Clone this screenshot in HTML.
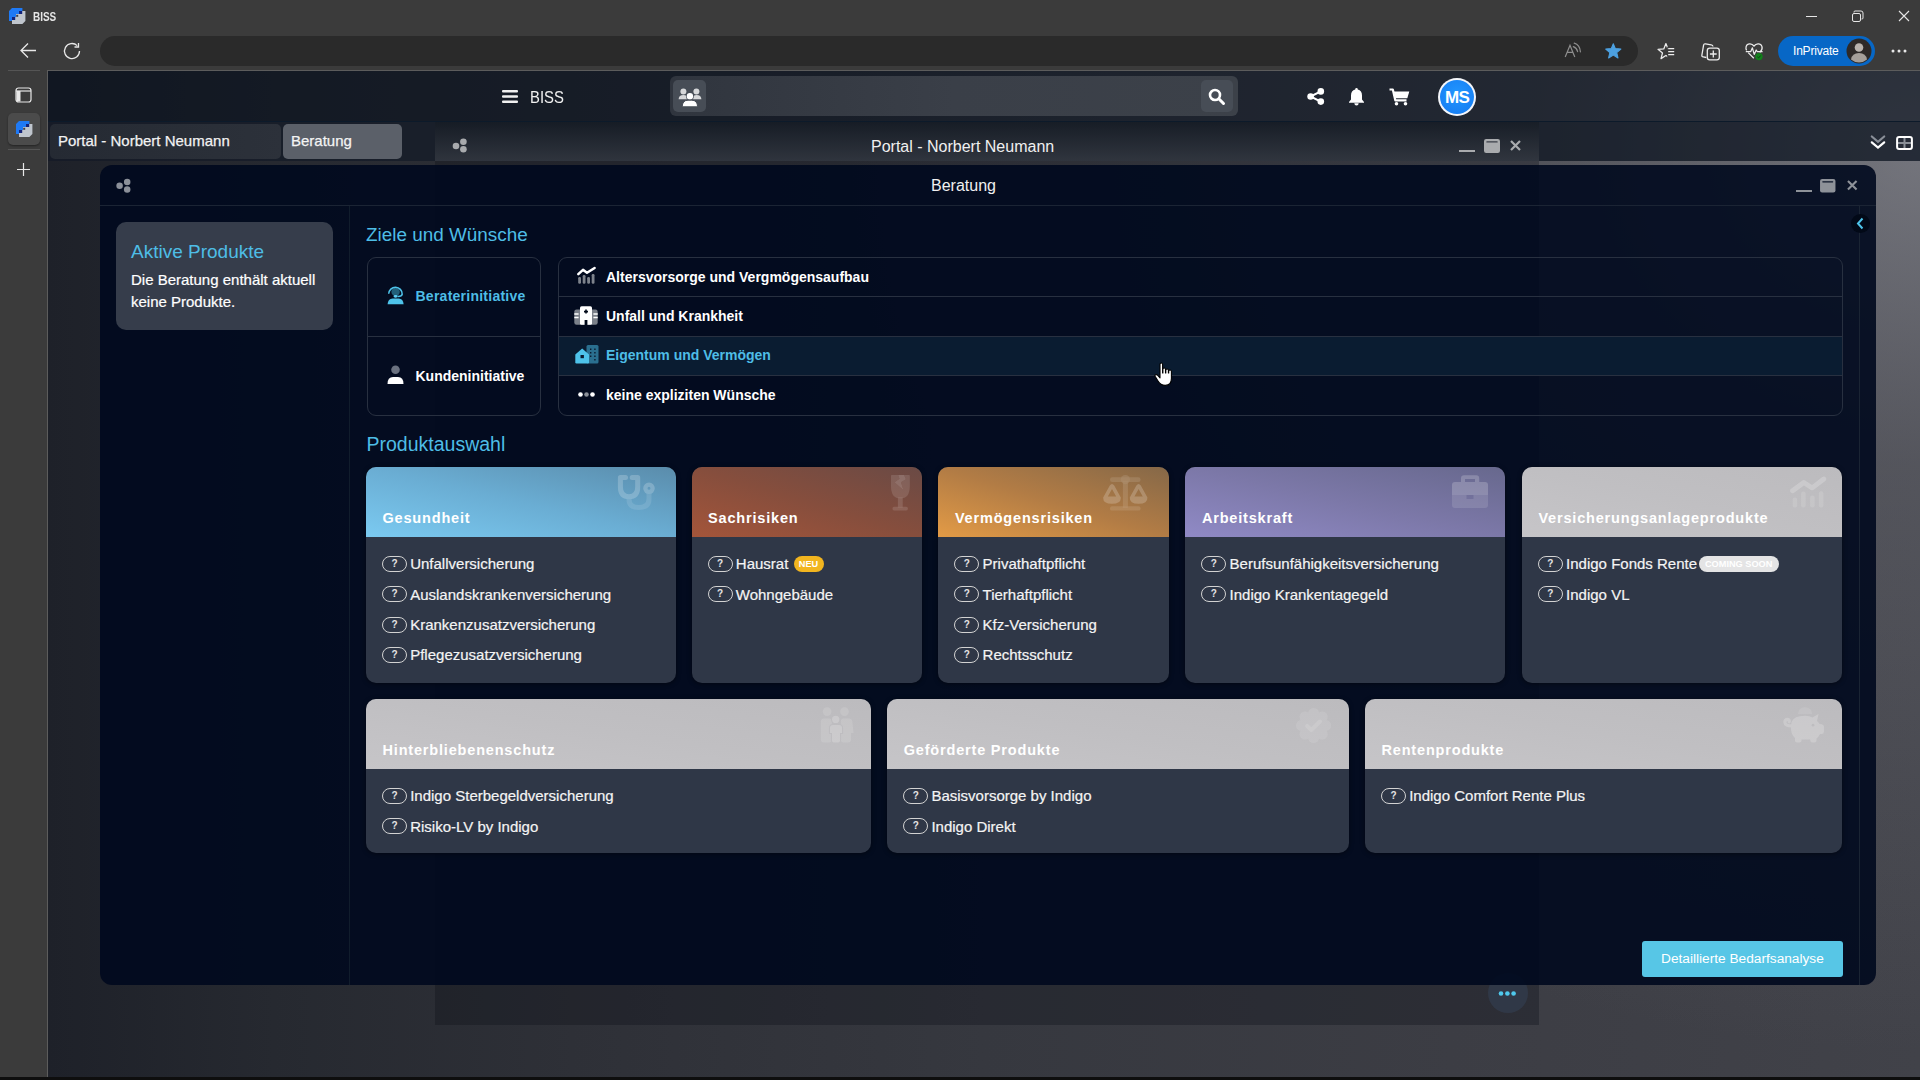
<!DOCTYPE html>
<html><head><meta charset="utf-8">
<style>
*{box-sizing:border-box;margin:0;padding:0}
html,body{width:1920px;height:1080px;overflow:hidden;background:#3b3b3b;font-family:"Liberation Sans",sans-serif;color:#fff;position:relative}
div,span{position:absolute}
svg{position:absolute;display:block;overflow:visible}
.t{white-space:nowrap;line-height:1}
/* browser chrome */
#addr{left:100px;top:36px;width:1538px;height:30px;border-radius:15px;background:#2a2a2a}
#vline{left:47px;top:70px;width:1px;height:1007px;background:#5c5c5c}
#hline{left:47px;top:70px;width:1873px;height:1px;background:#5c5c5c}
#bottomline{left:0;top:1077px;width:1920px;height:3px;background:#0e0e0e}
/* page */
#page{left:48px;top:71px;width:1872px;height:1006px;overflow:hidden;
 background:radial-gradient(ellipse 1100px 900px at 1872px 80px, rgba(140,141,149,.68) 0%, rgba(112,113,121,.4) 35%, rgba(80,81,88,0) 100%),
  linear-gradient(90deg,#1e2129 0%,#262930 12%,#2e3037 28%,#36383f 50%,#3c3d44 75%,#414249 100%);}
#apphdr{left:48px;top:71px;width:1872px;height:90px;background:rgba(10,18,30,0.66)}
#apphdrline{left:48px;top:121px;width:1872px;height:1px;background:#0c1a2a}
/* modal */
#modal{left:99.5px;top:165px;width:1776.5px;height:820px;border-radius:12px;overflow:hidden;
  background:rgba(0,9,30,.9)}
.card{border-radius:10px;background:#2f3747;box-shadow:0 1px 5px rgba(0,0,0,.45)}
.ctitle{font-size:14.5px;font-weight:700;letter-spacing:.82px;color:#fff}
.q{width:25px;height:16px;border:1.2px solid #d2d2d2;border-radius:8px;font-size:10px;font-weight:700;color:#e4e4e4;text-align:center;line-height:13.6px}
.it{font-size:15px;color:#f4f4f4;-webkit-text-stroke:.2px #f4f4f4}
.badge{height:16px;border-radius:8px;font-size:9.2px;font-weight:700;color:#fff;text-align:center;line-height:16px}
.wm{opacity:.2}
</style></head><body>
<!-- CHROME -->
<!-- favicon -->
<svg style="left:9px;top:8px" width="17" height="17" viewBox="0 0 17 17"><path d="M3 3 H16.4 V13 L13.4 16 H3Z" fill="#bfc5cd"/><path d="M3 0 H13.4 V3 H10 V6 H7 V9 H3 V13 H0 V3Z" fill="#1f7af5"/><rect x="10" y="3" width="3.2" height="3" fill="#14247a"/><rect x="3" y="9" width="3.2" height="3" fill="#14247a"/><rect x="7.2" y="6.8" width="2" height="2" fill="#3a3d4a"/></svg>
<span class="t" style="left:33.3px;top:11px;font-size:12px;font-weight:700;color:#e6e6e6;transform:scaleX(.83);transform-origin:0 0">BISS</span>
<!-- window controls -->
<svg style="left:1806px;top:16px" width="11" height="1"><rect width="11" height="1" fill="#e6e6e6"/></svg>
<svg style="left:1851px;top:10px" width="13" height="12" viewBox="0 0 13 12"><path d="M3 2.5 V2 Q3 1 4 1 H10 Q12 1 12 3 V8 Q12 9 11 9 H10.5" fill="none" stroke="#e6e6e6" stroke-width="1"/><rect x="1.5" y="3.5" width="8" height="8" rx="1.5" fill="none" stroke="#e6e6e6" stroke-width="1"/></svg>
<svg style="left:1898px;top:10px" width="12" height="12" viewBox="0 0 12 12"><path d="M1 1 L11 11 M11 1 L1 11" stroke="#e6e6e6" stroke-width="1.1"/></svg>
<!-- back / refresh -->
<svg style="left:19px;top:42px" width="18" height="17" viewBox="0 0 18 17"><path d="M9 1.5 L2 8.5 L9 15.5 M2 8.5 H17" fill="none" stroke="#e8e8e8" stroke-width="1.3"/></svg>
<svg style="left:63px;top:42px" width="19" height="18" viewBox="0 0 19 18"><path d="M16.5 9 A7.5 7.5 0 1 1 14.2 3.6" fill="none" stroke="#e8e8e8" stroke-width="1.3"/><path d="M15.5 1 V5 H11.5" fill="none" stroke="#e8e8e8" stroke-width="1.3"/></svg>
<div id="addr"></div>
<!-- toolbar right -->
<svg style="left:1564px;top:42px" width="20" height="17" viewBox="0 0 20 17"><path d="M1.2 15 L6 3.3 L10.8 15 M3 10.4 H9" fill="none" stroke="#8e8e8e" stroke-width="1.2"/><path d="M9.3 4.6 Q12.8 5.8 13.6 9.6 M10.2 1.2 Q15.9 2.8 16.4 9.8" fill="none" stroke="#8e8e8e" stroke-width="1.2" stroke-linecap="round"/></svg>
<svg style="left:1604.6px;top:42.8px" width="16.6" height="16" viewBox="0 0 24 23"><path d="M12 1 L15 8 L23 8.6 L17 13.8 L18.8 21.6 L12 17.4 L5.2 21.6 L7 13.8 L1 8.6 L9 8Z" fill="#4ca0e0" stroke="#4ca0e0" stroke-width="1.5" stroke-linejoin="round"/></svg>
<svg style="left:1656px;top:42px" width="20" height="19" viewBox="0 0 20 19"><polygon points="9.90,1.60 12.02,6.99 17.79,7.34 13.32,11.01 14.78,16.61 9.90,13.50 5.02,16.61 6.48,11.01 2.01,7.34 7.78,6.99" fill="none" stroke="#ececec" stroke-width="1.25" stroke-linejoin="round"/><rect x="11.2" y="4.8" width="9" height="14.2" fill="#3b3b3b"/><path d="M12.2 6.6 H18.2 M12.2 9.6 H18.2 M12.2 12.6 H18.2" stroke="#ececec" stroke-width="1.25"/></svg>
<svg style="left:1700px;top:42px" width="21" height="19" viewBox="0 0 21 19"><path d="M6.3 15.5 L3.2 14.9 Q1.6 14.6 1.9 13 L3.6 3.2 Q3.9 1.6 5.5 1.9 L11.2 2.9 Q12.8 3.2 13 4.5" fill="none" stroke="#ececec" stroke-width="1.3"/><rect x="7.3" y="6.2" width="12" height="11.6" rx="2.4" fill="none" stroke="#ececec" stroke-width="1.3"/><path d="M13.3 8.6 V15.4 M9.9 12 H16.7" stroke="#ececec" stroke-width="1.3"/></svg>
<svg style="left:1745px;top:42px" width="19" height="19" viewBox="0 0 19 19"><path d="M8.8 16.2 L3.2 10.6 M14.8 10.4 Q17.8 7.5 17 4.6 Q16 1.6 13 1.8 Q10.6 2 9 4 Q7.4 2 5 1.8 Q2 1.6 1.1 4.6 Q0.6 6.8 1.6 8.4" fill="none" stroke="#ececec" stroke-width="1.25"/><path d="M0.8 9.5 H5.8 L7.4 5.8 L9.2 12.4 L11.2 8 L12.2 9.5 H17.6" fill="none" stroke="#ececec" stroke-width="1.25" stroke-linejoin="round"/><circle cx="14" cy="14.6" r="3.7" fill="#12801c"/><path d="M12.4 14.8 L13.6 15.9 L15.6 13.6" fill="none" stroke="#0b3d12" stroke-width=".9"/></svg>
<div style="left:1778px;top:36px;width:97px;height:30px;border-radius:15px;background:#0767c6"></div>
<span class="t" style="left:1793px;top:45px;font-size:12px;color:#fff;letter-spacing:-.2px">InPrivate</span>
<svg style="left:1846px;top:38px" width="26" height="26" viewBox="0 0 26 26"><circle cx="13" cy="13" r="12.5" fill="#2e2a28"/><circle cx="13" cy="9.5" r="4.3" fill="#b9b3ad"/><path d="M5 21.5 Q6 15 13 15 Q20 15 21 21.5 Q17.5 24.5 13 24.5 Q8.5 24.5 5 21.5Z" fill="#a59f99"/></svg>
<svg style="left:1891px;top:49px" width="16" height="4"><circle cx="2" cy="2" r="1.5" fill="#e8e8e8"/><circle cx="8" cy="2" r="1.5" fill="#e8e8e8"/><circle cx="14" cy="2" r="1.5" fill="#e8e8e8"/></svg>
<!-- sidebar -->
<div style="left:8px;top:70px;width:32px;height:1px;background:#555"></div>
<svg style="left:15px;top:87px" width="17" height="16" viewBox="0 0 17 16"><rect x="1" y="1" width="15" height="14" rx="2.5" fill="none" stroke="#e8e8e8" stroke-width="1.2"/><path d="M1 4 H16" stroke="#e8e8e8" stroke-width="1.2"/><rect x="1.5" y="4" width="4" height="10.5" fill="#e8e8e8"/></svg>
<div style="left:8px;top:113px;width:32px;height:32px;border-radius:5px;background:#4b4b4b;box-shadow:0 1px 2px rgba(0,0,0,.4)"></div>
<svg style="left:15.5px;top:120.5px" width="17" height="17" viewBox="0 0 17 17"><path d="M3 3 H16.4 V13 L13.4 16 H3Z" fill="#bfc5cd"/><path d="M3 0 H13.4 V3 H10 V6 H7 V9 H3 V13 H0 V3Z" fill="#1f7af5"/><rect x="10" y="3" width="3.2" height="3" fill="#14247a"/><rect x="3" y="9" width="3.2" height="3" fill="#14247a"/><rect x="7.2" y="6.8" width="2" height="2" fill="#3a3d4a"/></svg>
<div style="left:8px;top:149px;width:32px;height:1px;background:#555"></div>
<svg style="left:16px;top:162px" width="15" height="15" viewBox="0 0 15 15"><path d="M7.5 1 V14 M1 7.5 H14" stroke="#e8e8e8" stroke-width="1.2"/></svg>

<div id="page"></div>
<div id="apphdr"></div>
<div id="apphdrline"></div>
<div style="left:1539px;top:122px;width:381px;height:39px;background:rgba(10,18,30,.22)"></div>
<div style="left:48px;top:122px;width:387px;height:39px;background:rgba(120,125,135,.05)"></div>
<!-- app header -->
<svg style="left:502px;top:90px" width="16" height="13" viewBox="0 0 16 13"><rect y="0" width="16" height="2.4" rx="1" fill="#f0f0f0"/><rect y="5.3" width="16" height="2.4" rx="1" fill="#f0f0f0"/><rect y="10.6" width="16" height="2.4" rx="1" fill="#f0f0f0"/></svg>
<span class="t" style="left:530px;top:89px;font-size:16.5px;color:#f0f0f0;transform:scaleX(.9);transform-origin:0 0">BISS</span>
<div style="left:670px;top:76px;width:568px;height:40px;border-radius:6px;background:linear-gradient(90deg,#30353e,#3a3f48 50%,#3c4149)"></div>
<div style="left:673px;top:80px;width:33px;height:32px;border-radius:5px;background:#474d56"></div>
<svg style="left:678px;top:87px" width="24" height="20" viewBox="0 0 24 20"><g fill="#d6d7d9"><circle cx="5.4" cy="4.5" r="3"/><circle cx="18.4" cy="4.5" r="3"/><path d="M0.6 12.3 Q0.8 8 5.4 8 Q9 8 9.6 10.5 V12.3Z M23.4 12.3 Q23.2 8 18.6 8 Q15 8 14.4 10.5 V12.3Z"/></g><circle cx="11.9" cy="9.2" r="3.9" fill="#474d56"/><circle cx="11.9" cy="9.2" r="3.2" fill="#fff"/><path d="M4.2 19.8 Q4.4 13.2 10 13.2 H13.8 Q19.4 13.2 19.6 19.8Z" fill="#fff" stroke="#474d56" stroke-width="1"/></svg>
<div style="left:1201px;top:80px;width:32px;height:32px;border-radius:5px;background:#474d56"></div>
<svg style="left:1208px;top:88px" width="18" height="17" viewBox="0 0 18 17"><circle cx="7" cy="7" r="5" fill="none" stroke="#fff" stroke-width="2.6"/><path d="M10.8 10.8 L15.5 15.5" stroke="#fff" stroke-width="3" stroke-linecap="round"/></svg>
<svg style="left:1307px;top:88px" width="18" height="17" viewBox="0 0 18 17"><circle cx="3.6" cy="8.5" r="3.3" fill="#fff"/><circle cx="13.8" cy="3.4" r="3.3" fill="#fff"/><circle cx="13.8" cy="13.6" r="3.3" fill="#fff"/><path d="M3.6 8.5 L13.8 3.4 M3.6 8.5 L13.8 13.6" stroke="#fff" stroke-width="2"/></svg>
<svg style="left:1348px;top:87px" width="17" height="19" viewBox="0 0 17 19"><path d="M8.5 1 Q9.8 1 9.8 2.4 Q14 3.4 14 8.5 V12.5 L16 15 V15.8 H1 V15 L3 12.5 V8.5 Q3 3.4 7.2 2.4 Q7.2 1 8.5 1Z" fill="#fff"/><path d="M6.3 16.3 Q6.5 18.5 8.5 18.5 Q10.5 18.5 10.7 16.3Z" fill="#fff"/></svg>
<svg style="left:1389px;top:88px" width="21" height="18" viewBox="0 0 21 18"><path d="M0.5 1.5 H3.8 L6.3 12.3 H17.5" fill="none" stroke="#fff" stroke-width="2.2" stroke-linejoin="round"/><path d="M4.8 3.5 H20.3 L18.3 10.2 H6.3Z" fill="#fff"/><circle cx="7.5" cy="15.8" r="1.8" fill="#fff"/><circle cx="16.5" cy="15.8" r="1.8" fill="#fff"/></svg>
<div style="left:1438px;top:77.5px;width:38px;height:38px;border-radius:50%;background:#f4f6fa"></div>
<div style="left:1440px;top:79.5px;width:34px;height:34px;border-radius:50%;background:radial-gradient(circle at 50% 40%,#2196ff,#1479f0)"></div>
<span class="t" style="left:1443px;top:89px;width:28px;text-align:center;font-size:17px;font-weight:700;color:#fff;letter-spacing:-.8px">MS</span>
<!-- tabs -->
<div style="left:50px;top:124px;width:231px;height:35px;border-radius:5px;background:linear-gradient(90deg,#252a33,#2c313a)"></div>
<span class="t" style="left:58px;top:133px;font-size:15px;color:#f2f2f2;-webkit-text-stroke:.25px #f2f2f2">Portal - Norbert Neumann</span>
<div style="left:283px;top:124px;width:119px;height:35px;border-radius:5px;background:#5b6069"></div>
<span class="t" style="left:291px;top:133px;font-size:15px;color:#f4f4f4;-webkit-text-stroke:.25px #f4f4f4">Beratung</span>
<!-- double chevron + grid -->
<svg style="left:1870px;top:135px" width="16" height="15" viewBox="0 0 16 15"><path d="M1.8 1.5 L8 6.8 L14.2 1.5" fill="none" stroke="#8a8f98" stroke-width="2.2" stroke-linecap="round"/><path d="M1.8 7.3 L8 12.6 L14.2 7.3" fill="none" stroke="#fff" stroke-width="2.2" stroke-linecap="round"/></svg>
<svg style="left:1896px;top:135.5px" width="17" height="14" viewBox="0 0 17 14"><path d="M8.5 2 V12 M2 7 H15" stroke="#8a8f98" stroke-width="2"/><rect x="1.1" y="1.1" width="14.8" height="11.8" rx="2" fill="none" stroke="#fff" stroke-width="2"/></svg>
<!-- portal window -->
<div style="left:435px;top:122px;width:1104px;height:39px;background:linear-gradient(180deg,rgba(22,28,37,.85),rgba(50,55,64,.9))"></div>
<div style="left:435px;top:161px;width:1104px;height:864px;background:rgba(14,18,26,.35)"></div>
<svg style="left:452px;top:138px" width="15" height="15" viewBox="0 0 15 15"><circle cx="4" cy="8" r="3.3" fill="#a8aaad"/><circle cx="11.4" cy="3.8" r="3.3" fill="#a8aaad"/><circle cx="11.4" cy="11.3" r="3.3" fill="#a8aaad"/></svg>
<span class="t" style="left:871px;top:139.3px;font-size:16px;color:#f0f0f0">Portal - Norbert Neumann</span>
<div style="left:1459px;top:150px;width:16px;height:2px;background:#a9abae"></div>
<svg style="left:1483.5px;top:138.5px" width="16" height="14" viewBox="0 0 16 14"><rect x="0" y="0" width="16" height="14" rx="2.2" fill="#a9abae"/><rect x="2.3" y="2.3" width="11.4" height="1.2" rx=".6" fill="#3a3f48"/></svg>
<svg style="left:1510px;top:140px" width="11" height="11" viewBox="0 0 11 11"><path d="M1 1 L10 10 M10 1 L1 10" stroke="#a9abae" stroke-width="2.2"/></svg>
<!-- dots button -->
<div style="left:1487.5px;top:973px;width:40px;height:40px;border-radius:50%;background:rgba(52,66,86,.55)"></div>
<!-- MODAL -->
<div id="modal"></div>
<div style="left:99.5px;top:205px;width:1776.5px;height:1px;background:#1b2434"></div>
<div style="left:349px;top:206px;width:1px;height:779px;background:#111d2c"></div>
<div style="left:1859px;top:206px;width:1px;height:779px;background:#1a2433"></div>
<svg style="left:115px;top:177.5px" width="16" height="16" viewBox="0 0 16 16"><circle cx="4.6" cy="7.75" r="3.25" fill="#8b9099"/><circle cx="12.2" cy="4" r="3.25" fill="#8b9099"/><circle cx="12.2" cy="11.6" r="3.25" fill="#8b9099"/></svg>
<span class="t" style="left:931px;top:177.5px;font-size:16px;color:#f0f0f0">Beratung</span>
<div style="left:1795.5px;top:190px;width:16px;height:2px;background:#8e9299"></div>
<svg style="left:1820px;top:178.5px" width="15.5" height="13.5" viewBox="0 0 16 14"><rect x="0" y="0" width="16" height="14" rx="2.2" fill="#8e9299"/><rect x="2.3" y="2.3" width="11.4" height="1.2" rx=".6" fill="#0b1528"/></svg>
<svg style="left:1846.5px;top:180px" width="10.5" height="10.5" viewBox="0 0 11 11"><path d="M1 1 L10 10 M10 1 L1 10" stroke="#8e9299" stroke-width="2.2"/></svg>
<div style="left:1850.5px;top:214px;width:19px;height:19px;border-radius:50%;background:#020917"></div>
<svg style="left:1856px;top:217px" width="8" height="13" viewBox="0 0 8 13"><path d="M6.5 1.5 L2 6.5 L6.5 11.5" fill="none" stroke="#4ec3ea" stroke-width="2"/></svg>
<!-- left panel -->
<div style="left:116px;top:222px;width:217px;height:108px;border-radius:10px;background:#363d4b"></div>
<span class="t" style="left:131px;top:242px;font-size:19px;color:#4ebde6">Aktive Produkte</span>
<span class="t" style="left:131px;top:268.5px;font-size:15px;color:#fff;line-height:22px;-webkit-text-stroke:.2px #fff">Die Beratung enthält aktuell<br>keine Produkte.</span>
<!-- Ziele und Wünsche -->
<span class="t" style="left:366px;top:225.5px;font-size:18.9px;color:#4ebde6">Ziele und Wünsche</span>
<div style="left:366.5px;top:257px;width:174.5px;height:158.5px;border:1px solid #283040;border-radius:9px"></div>
<div style="left:367px;top:336px;width:173.5px;height:1px;background:#283040"></div>
<svg style="left:387px;top:286px" width="17" height="19" viewBox="0 0 17 19"><circle cx="8.6" cy="5.9" r="4.2" fill="#22607a"/><path d="M1.7 7.8 A6.6 6.6 0 1 1 15.2 8.2 Q14.6 10.6 10.6 10.4" fill="none" stroke="#4ec3ea" stroke-width="1.5"/><ellipse cx="8.6" cy="10.3" rx="2.1" ry="1.4" fill="#5ccff5"/><path d="M0.6 18.3 Q0.9 12.6 5.6 12.4 H11.6 Q16.3 12.6 16.6 18.3Z" fill="#4ec3ea"/></svg>
<span class="t" style="left:415.5px;top:289px;font-size:14px;font-weight:700;color:#4ebde6;letter-spacing:.25px">Beraterinitiative</span>
<svg style="left:387px;top:365px" width="17" height="19" viewBox="0 0 17 19"><circle cx="8.5" cy="4.8" r="4.3" fill="#6b7280"/><path d="M0.5 19 Q0.5 12 6 12 H11 Q16.5 12 16.5 19Z" fill="#fff"/></svg>
<span class="t" style="left:415.5px;top:368.5px;font-size:14px;font-weight:700;color:#fff">Kundeninitiative</span>
<!-- wishes list -->
<div style="left:557.5px;top:336.5px;width:1284.5px;height:39px;background:#0a1c31"></div>
<div style="left:557.5px;top:257px;width:1285px;height:158.5px;border:1px solid #283040;border-radius:9px"></div>
<div style="left:558px;top:296px;width:1284px;height:1px;background:#283040"></div>
<div style="left:558px;top:336px;width:1284px;height:1px;background:#283040"></div>
<div style="left:558px;top:375px;width:1284px;height:1px;background:#283040"></div>
<svg style="left:576.5px;top:266.5px" width="19" height="17" viewBox="0 0 19 17"><path d="M1.3 7.2 L6 2.8 L10 5.8 L17.6 1" fill="none" stroke="#fff" stroke-width="2.5" stroke-linecap="round" stroke-linejoin="round"/><rect x="1.2" y="10" width="2.8" height="6.8" rx="1.2" fill="#7d828b"/><rect x="5.7" y="8" width="2.8" height="8.8" rx="1.2" fill="#7d828b"/><rect x="10.2" y="10" width="2.8" height="6.8" rx="1.2" fill="#7d828b"/><rect x="14.7" y="7" width="2.8" height="9.8" rx="1.2" fill="#7d828b"/></svg>
<span class="t" style="left:606px;top:269.5px;font-size:14px;font-weight:700;color:#fff">Altersvorsorge und Vergmögensaufbau</span>
<svg style="left:574px;top:305.5px" width="24" height="19" viewBox="0 0 24 19"><rect x="0.3" y="3.6" width="23.4" height="15.2" rx="2.2" fill="#7b8089"/><rect x="6" y="0.3" width="12" height="18.5" rx="1.6" fill="#fff"/><path d="M12 3.6 V7.6 M10 5.6 H14" stroke="#020a1a" stroke-width="1.6"/><rect x="10.6" y="14" width="2.8" height="5" fill="#020a1a"/><path d="M0.3 8 H4.6 M0.3 11.5 H4.6 M19.4 8 H23.7 M19.4 11.5 H23.7" stroke="#fff" stroke-width="1.5"/></svg>
<span class="t" style="left:606px;top:308.5px;font-size:14px;font-weight:700;color:#fff">Unfall und Krankheit</span>
<svg style="left:574.5px;top:345px" width="24" height="19" viewBox="0 0 24 19"><rect x="11.5" y="0" width="12" height="18.5" rx="1.5" fill="#2a6f8f"/><path d="M15 4.2 H16.4 M19.2 4.2 H20.6 M15 7.7 H16.4 M19.2 7.7 H20.6 M15 11.2 H16.4 M19.2 11.2 H20.6 M19.2 14.7 H20.6" stroke="#0a1c31" stroke-width="1.4"/><path d="M0.3 9.6 L7.2 3.4 L14 9.6 V17.3 Q14 18.5 12.8 18.5 H1.5 Q0.3 18.5 0.3 17.3Z" fill="#4ec3ea"/><rect x="5.5" y="10" width="3.4" height="3.2" fill="#0a1c31"/></svg>
<span class="t" style="left:606px;top:348.2px;font-size:14px;font-weight:700;color:#4ebde6">Eigentum und Vermögen</span>
<svg style="left:578px;top:391.5px" width="17" height="5" viewBox="0 0 17 5"><circle cx="2.5" cy="2.5" r="2.3" fill="#fff"/><circle cx="8.5" cy="2.5" r="2.3" fill="#8a8f98"/><circle cx="14.5" cy="2.5" r="2.3" fill="#fff"/></svg>
<span class="t" style="left:606px;top:387.5px;font-size:14px;font-weight:700;color:#fff">keine expliziten Wünsche</span>
<!-- Produktauswahl -->
<span class="t" style="left:366.5px;top:435.2px;font-size:19.5px;color:#4ebde6">Produktauswahl</span>
<!-- CARDS START -->
<div class="card" style="left:366px;top:467px;width:309.6px;height:215.5px"></div>
<div style="left:366px;top:467px;width:309.6px;height:70px;border-radius:10px 10px 0 0;background:linear-gradient(to top right,#7bcaf1 0%,#6aadd3 50%,#5a8cab 100%)"></div>
<svg class="wm" style="left:617px;top:475px" width="38" height="36" viewBox="0 0 38 36"><path d="M12 21.7 V24 Q12 32.5 21.5 32.5 Q32 32.5 32 24 V18" fill="none" stroke="#fff" stroke-opacity=".55" stroke-width="5"/><path d="M8.5 2.6 H3.4 V12 Q3.4 21.7 12 21.7 Q20.7 21.7 20.7 12 V2.6 H15.2" fill="none" stroke="#fff" stroke-width="5" stroke-linecap="round" stroke-linejoin="round"/><circle cx="32" cy="13.3" r="3.65" fill="none" stroke="#fff" stroke-width="4.3"/></svg>
<span class="t ctitle" style="left:382.5px;top:510.5px">Gesundheit</span>
<div class="q" style="left:382px;top:556.00px">?</div>
<span class="t it" style="left:410.2px;top:556.30px">Unfallversicherung</span>
<div class="q" style="left:382px;top:586.35px">?</div>
<span class="t it" style="left:410.2px;top:586.65px">Auslandskrankenversicherung</span>
<div class="q" style="left:382px;top:616.70px">?</div>
<span class="t it" style="left:410.2px;top:617.00px">Krankenzusatzversicherung</span>
<div class="q" style="left:382px;top:647.05px">?</div>
<span class="t it" style="left:410.2px;top:647.35px">Pflegezusatzversicherung</span>
<div class="card" style="left:691.6px;top:467px;width:230.9px;height:215.5px"></div>
<div style="left:691.6px;top:467px;width:230.9px;height:70px;border-radius:10px 10px 0 0;background:linear-gradient(to top right,#a4553a 0%,#864e3d 50%,#6a4a45 100%)"></div>
<svg class="wm" style="left:891px;top:475.2px" width="19" height="36" viewBox="0 0 19 36"><g fill="#fff" fill-opacity=".62"><path d="M0 0.8 Q0 0 0.8 0 H18 Q18.8 0 18.8 0.8 V11 Q18.8 23.5 9.4 23.5 Q0 23.5 0 11Z M7.2 0 L8.5 3.75 L3.5 7.3 L12.5 15.2 L10 7.3 L15 4.2 L13.1 0Z" fill-rule="evenodd"/><rect x="6.9" y="22" width="4.8" height="11"/><rect x="1.5" y="31.8" width="15.4" height="3.6" rx="1.6"/></g><path d="M7.2 0 H13.1 L15 4.2 L10 7.3 L12.5 15.2 L3.5 7.3 L8.5 3.75Z" fill="#fff"/></svg>
<span class="t ctitle" style="left:708.1px;top:510.5px">Sachrisiken</span>
<div class="q" style="left:707.6px;top:556.00px">?</div>
<span class="t it" style="left:735.8000000000001px;top:556.30px">Hausrat</span>
<div class="badge" style="left:793.5px;top:556.30px;width:30px;background:#f2b51f">NEU</div>
<div class="q" style="left:707.6px;top:586.35px">?</div>
<span class="t it" style="left:735.8000000000001px;top:586.65px">Wohngebäude</span>
<div class="card" style="left:938.4px;top:467px;width:230.8px;height:215.5px"></div>
<div style="left:938.4px;top:467px;width:230.8px;height:70px;border-radius:10px 10px 0 0;background:linear-gradient(to top right,#e39b46 0%,#b27c45 50%,#856848 100%)"></div>
<svg class="wm" style="left:1103px;top:475px" width="46" height="36" viewBox="0 0 46 36"><g fill="#fff" fill-opacity=".55"><rect x="7" y="2.3" width="30.6" height="4.7" rx="2.35"/><circle cx="22.4" cy="4.6" r="4.6"/><rect x="19.9" y="6" width="5" height="27"/><rect x="7" y="31.25" width="30.6" height="4.35" rx="2.2"/></g><path d="M6.8 10.5 Q9 7.5 11.2 10.5 L17.8 22.5 Q18.2 28.8 9 28.8 Q-0.2 28.8 0.2 22.5Z M9 14 L13.2 21.5 H4.8Z" fill="#fff" fill-rule="evenodd"/><path d="M33.4 10.5 Q35.6 7.5 37.8 10.5 L44.4 22.5 Q44.8 28.8 35.6 28.8 Q26.4 28.8 26.8 22.5Z M35.6 14 L39.8 21.5 H31.4Z" fill="#fff" fill-rule="evenodd"/></svg>
<span class="t ctitle" style="left:954.9px;top:510.5px">Vermögensrisiken</span>
<div class="q" style="left:954.4px;top:556.00px">?</div>
<span class="t it" style="left:982.6px;top:556.30px">Privathaftpflicht</span>
<div class="q" style="left:954.4px;top:586.35px">?</div>
<span class="t it" style="left:982.6px;top:586.65px">Tierhaftpflicht</span>
<div class="q" style="left:954.4px;top:616.70px">?</div>
<span class="t it" style="left:982.6px;top:617.00px">Kfz-Versicherung</span>
<div class="q" style="left:954.4px;top:647.05px">?</div>
<span class="t it" style="left:982.6px;top:647.35px">Rechtsschutz</span>
<div class="card" style="left:1185.4px;top:467px;width:319.8px;height:215.5px"></div>
<div style="left:1185.4px;top:467px;width:319.8px;height:70px;border-radius:10px 10px 0 0;background:linear-gradient(to top right,#908ac6 0%,#7c78a8 50%,#67688d 100%)"></div>
<svg class="wm" style="left:1452px;top:475px" width="36" height="33" viewBox="0 0 36 33"><path d="M9 8 V3.2 Q9 0.2 12 0.2 H24.2 Q27.2 0.2 27.2 3.2 V8 H23 V4 H13 V8Z" fill="#fff"/><path d="M0 20 V10 Q0 7 3 7 H33 Q36 7 36 10 V20Z" fill="#fff"/><path d="M0 20 H14.5 V24 H21.5 V20 H36 V30 Q36 33 33 33 H3 Q0 33 0 30Z" fill="#fff" fill-opacity=".6"/></svg>
<span class="t ctitle" style="left:1201.9px;top:510.5px">Arbeitskraft</span>
<div class="q" style="left:1201.4px;top:556.00px">?</div>
<span class="t it" style="left:1229.6000000000001px;top:556.30px">Berufsunfähigkeitsversicherung</span>
<div class="q" style="left:1201.4px;top:586.35px">?</div>
<span class="t it" style="left:1229.6000000000001px;top:586.65px">Indigo Krankentagegeld</span>
<div class="card" style="left:1521.9px;top:467px;width:320.1px;height:215.5px"></div>
<div style="left:1521.9px;top:467px;width:320.1px;height:70px;border-radius:10px 10px 0 0;background:linear-gradient(to top right,#c6c5c8 0%,#c0bfc2 50%,#bcbbbe 100%)"></div>
<svg class="wm" style="left:1789.5px;top:477px" width="36" height="31" viewBox="0 0 36 31"><path d="M2.6 13.8 L13.8 5.5 L22.2 10.9 L33.8 2" fill="none" stroke="#fff" stroke-width="4.8" stroke-linecap="round" stroke-linejoin="round"/><g fill="#fff" fill-opacity=".6"><rect x="2.65" y="20.5" width="4.5" height="10" rx="2.25"/><rect x="11.15" y="14.5" width="4.5" height="16" rx="2.25"/><rect x="20.15" y="18.6" width="4.5" height="11.9" rx="2.25"/><rect x="28.85" y="14.2" width="4.5" height="16.3" rx="2.25"/></g></svg>
<span class="t ctitle" style="left:1538.4px;top:510.5px">Versicherungsanlageprodukte</span>
<div class="q" style="left:1537.9px;top:556.00px">?</div>
<span class="t it" style="left:1566.1000000000001px;top:556.30px">Indigo Fonds Rente</span>
<div class="badge" style="left:1698.7px;top:556.00px;width:80px;background:#e4e4e5">COMING SOON</div>
<div class="q" style="left:1537.9px;top:586.35px">?</div>
<span class="t it" style="left:1566.1000000000001px;top:586.65px">Indigo VL</span>
<div class="card" style="left:366px;top:699px;width:504.6px;height:154px"></div>
<div style="left:366px;top:699px;width:504.6px;height:70px;border-radius:10px 10px 0 0;background:linear-gradient(to top right,#c6c5c8 0%,#c0bfc2 50%,#bcbbbe 100%)"></div>
<svg class="wm" style="left:820px;top:707px" width="34" height="36" viewBox="0 0 34 36"><defs><mask id="fm"><rect width="34" height="36" fill="#fff"/><g fill="#000" stroke="#000" stroke-width="2.2"><circle cx="15.7" cy="12.4" r="3.6"/><path d="M10 21 Q10 18 13 18 H19 Q22 18 22 21 V26 H20 V33.6 Q20 35.6 18 35.6 H14 Q12 35.6 12 33.6 V26 H10Z"/></g></mask></defs><g fill="#fff" fill-opacity=".6" mask="url(#fm)"><circle cx="7.1" cy="4.6" r="4.3"/><circle cx="24.5" cy="4.6" r="4.3"/><rect x="0.9" y="11.5" width="10.9" height="24.1" rx="3"/><path d="M23.8 11.5 H29.5 Q31.8 11.5 32.2 14 L33.6 26 H31 V32.6 Q31 35.6 28 35.6 H23.8 Q20.8 35.6 20.8 32.6 V14.5 Q20.8 11.5 23.8 11.5Z"/></g><g fill="#fff"><circle cx="15.7" cy="12.4" r="3.6"/><path d="M10 21 Q10 18 13 18 H19 Q22 18 22 21 V26 H20 V33.6 Q20 35.6 18 35.6 H14 Q12 35.6 12 33.6 V26 H10Z"/></g></svg>
<span class="t ctitle" style="left:382.5px;top:742.5px">Hinterbliebenenschutz</span>
<div class="q" style="left:382px;top:788.00px">?</div>
<span class="t it" style="left:410.2px;top:788.30px">Indigo Sterbegeldversicherung</span>
<div class="q" style="left:382px;top:818.35px">?</div>
<span class="t it" style="left:410.2px;top:818.65px">Risiko-LV by Indigo</span>
<div class="card" style="left:887.2px;top:699px;width:461.8px;height:154px"></div>
<div style="left:887.2px;top:699px;width:461.8px;height:70px;border-radius:10px 10px 0 0;background:linear-gradient(to top right,#c6c5c8 0%,#c0bfc2 50%,#bcbbbe 100%)"></div>
<svg class="wm" style="left:1296px;top:707.5px" width="35" height="35" viewBox="0 0 35 35"><defs><mask id="cm"><rect width="35" height="35" fill="#fff"/><path d="M11.1 18 L15.3 22.1 L24 13.5" fill="none" stroke="#000" stroke-width="4.2" stroke-linecap="round" stroke-linejoin="round"/></mask></defs><g fill="#fff" opacity=".5" mask="url(#cm)"><circle cx="17.6" cy="17.5" r="13.5"/><circle cx="17.60" cy="5.30" r="5.4"/><circle cx="26.23" cy="8.87" r="5.4"/><circle cx="29.80" cy="17.50" r="5.4"/><circle cx="26.23" cy="26.13" r="5.4"/><circle cx="17.60" cy="29.70" r="5.4"/><circle cx="8.97" cy="26.13" r="5.4"/><circle cx="5.40" cy="17.50" r="5.4"/><circle cx="8.97" cy="8.87" r="5.4"/></g><path d="M11.1 18 L15.3 22.1 L24 13.5" fill="none" stroke="#fff" stroke-width="4.2" stroke-linecap="round" stroke-linejoin="round"/></svg>
<span class="t ctitle" style="left:903.7px;top:742.5px">Geförderte Produkte</span>
<div class="q" style="left:903.2px;top:788.00px">?</div>
<span class="t it" style="left:931.4000000000001px;top:788.30px">Basisvorsorge by Indigo</span>
<div class="q" style="left:903.2px;top:818.35px">?</div>
<span class="t it" style="left:931.4000000000001px;top:818.65px">Indigo Direkt</span>
<div class="card" style="left:1365px;top:699px;width:477px;height:154px"></div>
<div style="left:1365px;top:699px;width:477px;height:70px;border-radius:10px 10px 0 0;background:linear-gradient(to top right,#c6c5c8 0%,#c0bfc2 50%,#bcbbbe 100%)"></div>
<svg class="wm" style="left:1782.5px;top:707px" width="41" height="36" viewBox="0 0 41 36"><path d="M15 6.9 A7.05 6.7 0 0 1 29.1 6.9Z" fill="#fff" fill-opacity=".5"/><defs><mask id="pm"><rect width="41" height="36" fill="#fff"/><circle cx="30" cy="18.2" r="1.4" fill="#000"/></mask></defs><g fill="#fff" mask="url(#pm)"><path d="M8.5 15 Q11 8.7 22 8.7 Q26.5 8.7 29.5 10.5 L35.5 6.9 L34 14 Q35.8 15.5 36.5 17 Q40.9 17 40.9 19.5 V24.5 Q40.9 27 38.5 27 H37 Q35.5 30 33.5 31.5 V33.6 Q33.5 35.6 31.5 35.6 H29.3 Q27.3 35.6 27.3 33.6 V32.4 H18.5 V33.6 Q18.5 35.6 16.5 35.6 H14 Q12 35.6 12 33.6 V31 Q8 27.5 8 21Z"/><path d="M9.5 18.8 Q2 19.2 1.9 15.2 Q1.9 12.3 4.6 12.3 Q6.6 12.5 6.2 14.8" fill="none" stroke="#fff" stroke-width="3.2" stroke-linecap="round"/></g></svg>
<span class="t ctitle" style="left:1381.5px;top:742.5px">Rentenprodukte</span>
<div class="q" style="left:1381px;top:788.00px">?</div>
<span class="t it" style="left:1409.2px;top:788.30px">Indigo Comfort Rente Plus</span>
<!-- CARDS END -->
<svg style="left:1498px;top:990.5px" width="19" height="5" viewBox="0 0 19 5"><circle cx="3" cy="2.5" r="2.3" fill="#4fc8ec"/><circle cx="9.4" cy="2.5" r="2.3" fill="#4fc8ec"/><circle cx="15.6" cy="2.5" r="2.3" fill="#4fc8ec"/></svg>
<!-- button -->
<div style="left:1642px;top:941px;width:201px;height:36px;border-radius:3px;background:#57c6e6"></div>
<span class="t" style="left:1661px;top:952px;font-size:13.7px;color:#fff">Detaillierte Bedarfsanalyse</span>

<div id="vline"></div>
<div id="hline"></div>
<div id="bottomline"></div>
<!-- cursor -->
<svg style="left:1154px;top:361.5px" width="20" height="25" viewBox="0 0 20 25"><path d="M6 2.3 Q6 1 7.3 1 Q8.6 1 8.6 2.3 V11 L8.9 11 V7.3 Q8.9 6 10.2 6 Q11.5 6 11.5 7.3 V11 L11.8 11 V8.3 Q11.8 7 13.1 7 Q14.4 7 14.4 8.3 V11 L14.7 11 V9.3 Q14.7 8 16 8 Q17.4 8 17.4 9.3 V16.6 Q17.4 23.4 11.2 23.4 Q6.6 23.4 4 19 L1.1 14.3 Q0.5 13.2 1.6 12.7 Q2.6 12.3 3.5 13.2 L6 15.8Z" fill="#fff" stroke="#000" stroke-width="1.1" stroke-linejoin="round"/></svg>
</body></html>
